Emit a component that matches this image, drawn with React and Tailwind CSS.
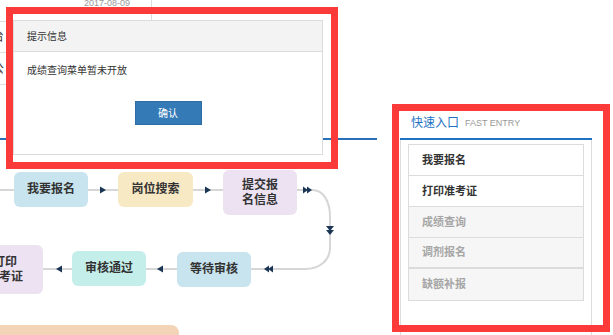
import React from "react";

const cjk = { fontFamily: '"Liberation Sans", "Noto Sans CJK SC", sans-serif' };

function Node({ className, children }) {
  return (
    <div
      className={
        "absolute flex items-center justify-center rounded-[6px] text-center text-[12px] font-bold leading-[15px] text-[#333] " +
        className
      }
    >
      {children}
    </div>
  );
}

function FlowChart() {
  const arrow = "#1b3654";
  return (
    <div className="relative h-[195px] w-full">
      <svg className="absolute left-0 top-0" width="377" height="195">
        <g stroke="#d6d6d6" strokeWidth="2" fill="none">
          <path d="M0 50 H14" />
          <path d="M88 50 H118" />
          <path d="M193 50 H223" />
          <path d="M297 50 H312 C 324 50 330 62 330 77 V108 C 330 120 320 129 305 129 H251" />
          <path d="M146 129 H177" />
          <path d="M43 129 H72" />
        </g>
        <g fill={arrow}>
          <path d="M100 46.5 L106 50 L100 53.5 Z" />
          <path d="M205 46.5 L211 50 L205 53.5 Z" />
          <path d="M303 46.5 L308 50 L303 53.5 Z" />
          <path d="M307 46.5 L312 50 L307 53.5 Z" />
          <path d="M326 86 L334 86 L330 91 Z" />
          <path d="M326 90 L334 90 L330 95 Z" />
          <path d="M273 125.5 L268 129 L273 132.5 Z" />
          <path d="M269 125.5 L264 129 L269 132.5 Z" />
          <path d="M163 125.5 L157 129 L163 132.5 Z" />
          <path d="M62 125.5 L56 129 L62 132.5 Z" />
        </g>
      </svg>
      <Node className="left-[14px] top-[32px] h-[35px] w-[74px] bg-[#c7e4ef]">我要报名</Node>
      <Node className="left-[118px] top-[32px] h-[35px] w-[75px] bg-[#f7e9c4]">岗位搜索</Node>
      <Node className="left-[223px] top-[30px] h-[45px] w-[74px] bg-[#ece2f2]">
        提交报
        <br />
        名信息
      </Node>
      <Node className="left-[177px] top-[112px] h-[35px] w-[74px] bg-[#c7e4ef]">等待审核</Node>
      <Node className="left-[72px] top-[111px] h-[35px] w-[74px] bg-[#c4eeea]">审核通过</Node>
      <Node className="left-[-33px] top-[105px] h-[49px] w-[76px] bg-[#ece2f2]">
        打印
        <br />
        准考证
      </Node>
      <div className="absolute left-0 top-[185px] h-[20px] w-[179px] rounded-tr-[8px] bg-[#f3d4b7]" />
    </div>
  );
}

function QuickEntry() {
  const rows = [
    { t: "我要报名", on: true },
    { t: "打印准考证", on: true },
    { t: "成绩查询", on: false },
    { t: "调剂报名", on: false },
    { t: "缺额补报", on: false },
  ];
  return (
    <div className="flex w-[192px] flex-col pt-[112px]">
      <div className="flex h-[28px] items-center gap-[6px] border-b-2 border-[#1f73c4] pb-[4px] pl-[11px]">
        <span className="text-[12px] leading-none text-[#1f73c4]">快速入口</span>
        <span className="text-[9px] leading-none text-[#999]">FAST ENTRY</span>
      </div>
      <div className="flex h-[200px] flex-col border-x border-[#dcdcdc] px-[7px] pt-[4px]">
        <div className="flex flex-col border border-[#dcdcdc]">
          {rows.map((r, i) => (
            <div
              key={r.t}
              className={
                "flex h-[31px] items-center pl-[13px] text-[11px] font-bold " +
                (i < 4 ? "border-b border-[#dcdcdc] " : "") +
                (i === 3 ? "border-b-[2px] " : "") +
                (r.on ? "bg-white text-[#333]" : "bg-[#f6f6f6] text-[#a6a6a6]")
              }
            >
              {r.t}
            </div>
          ))}
        </div>
      </div>
    </div>
  );
}

function Dialog() {
  return (
    <div className="absolute left-[13px] top-[20px] flex h-[135px] w-[310px] flex-col border border-[#dcdcdc] bg-white">
      <div className="flex h-[31px] items-center border-b border-[#dcdcdc] bg-[#f3f3f3] pl-[13px] text-[10px] text-[#333]">
        提示信息
      </div>
      <div className="flex flex-col pl-[13px] pt-[13px]">
        <div className="text-[10px] leading-[12px] text-[#333]">成绩查询菜单暂未开放</div>
        <div className="mt-[24px] flex justify-center pr-[13px]">
          <div className="flex h-[24px] w-[67px] items-center justify-center border border-[#2e6da4] bg-[#337ab7] text-[10px] text-white">
            确认
          </div>
        </div>
      </div>
    </div>
  );
}

export default function App() {
  return (
    <div className="relative h-[335px] w-[613px] overflow-hidden bg-white" style={cjk}>
      <div className="flex">
        <div className="flex w-[377px] flex-col">
          <div className="flex h-[138px] w-[320px] flex-col">
            <div className="flex h-[22px] border-b border-[#dcdcdc]">
              <div className="flex w-[152px] justify-end border-r border-[#dcdcdc] pr-[21px]">
                <span className="-mt-[3px] text-[9px] leading-[12px] text-[#999]">2017-08-09</span>
              </div>
            </div>
            <div className="flex h-[31px] items-center border-b border-[#dcdcdc]">
              <span className="-ml-[8px] text-[12px] text-[#333]">台</span>
            </div>
            <div className="flex h-[32px] items-center border-b border-[#dcdcdc]">
              <span className="-ml-[8px] text-[12px] text-[#333]">公</span>
            </div>
          </div>
          <div className="h-[2px] bg-[#2a70b8]" />
          <FlowChart />
        </div>
        <div className="ml-[23px]">
          <QuickEntry />
        </div>
      </div>
      <Dialog />
      <div className="pointer-events-none absolute left-[6px] top-[7px] h-[162px] w-[332px] border-[7px] border-[#fc3a3a]" />
      <div className="pointer-events-none absolute left-[392px] top-[104px] h-[228px] w-[218px] border-[7px] border-[#fc3a3a]" />
    </div>
  );
}
